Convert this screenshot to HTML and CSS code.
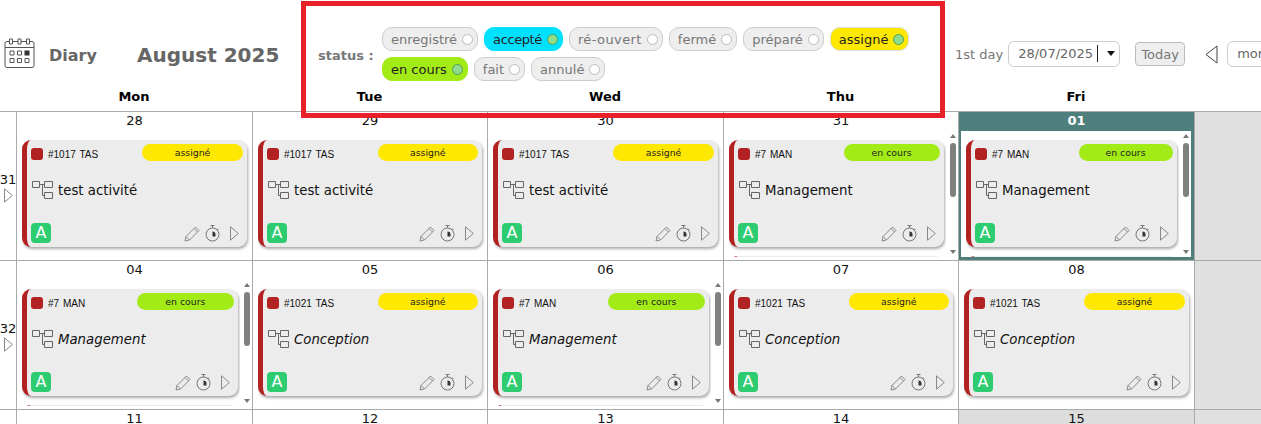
FILE: index.html
```html
<!DOCTYPE html>
<html lang="en">
<head>
  <meta charset="UTF-8" />
  <meta name="viewport" content="width=device-width, initial-scale=1" />
  <title>Diary</title>
  <link rel="stylesheet" href="styles.css">
</head>
<body>

<svg class="defs" width="0" height="0">
  <symbol id="i-flow" viewBox="0 0 21 18">
    <path d="M.5.5h7v6h-7zM12.500.5h8v6h-8zM12.500 11.500h8v6h-8zM7.500 3.500h5M10.500 3.500v11h2" fill="none" stroke="#666"/>
  </symbol>
  <symbol id="i-pencil" viewBox="0 0 16 16">
    <path d="M1 15l1-4.500L11.500 1l3.500 3.500L5.500 14zM2 10.500L5.500 14M10 2.500L13.500 6" fill="none" stroke="#888"/>
  </symbol>
  <symbol id="i-timer" viewBox="0 0 15 17">
    <circle cx="7.500" cy="9.500" r="6.500" fill="none" stroke="#777"/>
    <path d="M5.500.5h4M7.500.5v2.500M12 3.500l1.500 1.500" fill="none" stroke="#777"/>
    <path d="M7.500 6.500a3 3 0 0 1 3 3v2h-3z" fill="#333"/>
  </symbol>
  <symbol id="i-play" viewBox="0 0 9 15">
    <path d="M.5.8L8.300 7.500.5 14.200z" fill="none" stroke="#888"/>
  </symbol>
</svg>

<div class="header">
  <svg class="cal-icon" viewBox="0 0 31 30" width="31" height="30">
    <path d="M3 3.500h25a2 2 0 0 1 2 2v22a2 2 0 0 1-2 2H3a2 2 0 0 1-2-2v-22a2 2 0 0 1 2-2z" fill="#fff" stroke="#555"/>
    <path d="M1 9.500h29" stroke="#555"/>
    <path d="M5.500 1h3v5h-3zM14 1h3v5h-3zM22.500 1h3v5h-3z" fill="#fff" stroke="#555"/>
    <path d="M6 13h4v4H6zM13.500 13h4v4h-4zM6 20.500h4v4H6zM13.500 20.500h4v4h-4zM21 20.500h4v4h-4z" fill="none" stroke="#555"/>
    <path d="M20.500 12.500h5v5h-5z" fill="#333"/>
  </svg>
  <div class="diary">Diary</div>
  <div class="month">August 2025</div>
  <div class="status-label">status :</div>
  <div class="status-list">
    <span class="pill">enregistré<i></i></span>
    <span class="pill on accepted">accepté<i></i></span>
    <span class="pill spaced">ré-ouvert<i></i></span>
    <span class="pill">fermé<i></i></span>
    <span class="pill">préparé<i></i></span>
    <span class="pill on assigned">assigné<i></i></span>
    <span class="pill on progress">en cours<i></i></span>
    <span class="pill">fait<i></i></span>
    <span class="pill">annulé<i></i></span>
  </div>
  <label class="first-day">1st day</label>
  <div class="date-box">28/07/2025<b class="caret"></b><b class="arrow"></b></div>
  <button class="today">Today</button>
  <svg class="prev" viewBox="0 0 13 19" width="13" height="19"><path d="M12 1L1 9.500 12 18z" fill="none" stroke="#444"/></svg>
  <div class="mode-box">month</div>
</div>

<div class="day-names">
  <div></div>
  <div>Mon</div>
  <div>Tue</div>
  <div>Wed</div>
  <div>Thu</div>
  <div>Fri</div>
</div>

<div class="calendar">

  <!-- week 31 -->
  <div class="week">31<svg width="9" height="15"><use href="#i-play"/></svg></div>

  <div class="day">
    <div class="num">28</div>
    <div class="body">
      <div class="list">
        <div class="card">
          <div class="card-top"><span class="sq"></span><span class="ref">#1017 TAS</span><span class="tag assigned">assigné</span></div>
          <div class="card-title"><svg width="21" height="18"><use href="#i-flow"/></svg>test activité</div>
          <div class="card-foot"><span class="letter">A</span><span class="tools"><svg width="16" height="16"><use href="#i-pencil"/></svg><svg width="15" height="17"><use href="#i-timer"/></svg><svg width="9" height="15"><use href="#i-play"/></svg></span></div>
        </div>
      </div>
    </div>
  </div>

  <div class="day">
    <div class="num">29</div>
    <div class="body">
      <div class="list">
        <div class="card">
          <div class="card-top"><span class="sq"></span><span class="ref">#1017 TAS</span><span class="tag assigned">assigné</span></div>
          <div class="card-title"><svg width="21" height="18"><use href="#i-flow"/></svg>test activité</div>
          <div class="card-foot"><span class="letter">A</span><span class="tools"><svg width="16" height="16"><use href="#i-pencil"/></svg><svg width="15" height="17"><use href="#i-timer"/></svg><svg width="9" height="15"><use href="#i-play"/></svg></span></div>
        </div>
      </div>
    </div>
  </div>

  <div class="day">
    <div class="num">30</div>
    <div class="body">
      <div class="list">
        <div class="card">
          <div class="card-top"><span class="sq"></span><span class="ref">#1017 TAS</span><span class="tag assigned">assigné</span></div>
          <div class="card-title"><svg width="21" height="18"><use href="#i-flow"/></svg>test activité</div>
          <div class="card-foot"><span class="letter">A</span><span class="tools"><svg width="16" height="16"><use href="#i-pencil"/></svg><svg width="15" height="17"><use href="#i-timer"/></svg><svg width="9" height="15"><use href="#i-play"/></svg></span></div>
        </div>
      </div>
    </div>
  </div>

  <div class="day">
    <div class="num">31</div>
    <div class="body">
      <div class="list">
        <div class="card">
          <div class="card-top"><span class="sq"></span><span class="ref">#7 MAN</span><span class="tag progress">en cours</span></div>
          <div class="card-title"><svg width="21" height="18"><use href="#i-flow"/></svg>Management</div>
          <div class="card-foot"><span class="letter">A</span><span class="tools"><svg width="16" height="16"><use href="#i-pencil"/></svg><svg width="15" height="17"><use href="#i-timer"/></svg><svg width="9" height="15"><use href="#i-play"/></svg></span></div>
        </div>
        <div class="card"></div>
      </div>
      <div class="scroll"><b class="up"></b><b class="thumb"></b><b class="down"></b></div>
    </div>
  </div>

  <div class="day today-cell">
    <div class="num">01</div>
    <div class="body">
      <div class="list">
        <div class="card">
          <div class="card-top"><span class="sq"></span><span class="ref">#7 MAN</span><span class="tag progress">en cours</span></div>
          <div class="card-title"><svg width="21" height="18"><use href="#i-flow"/></svg>Management</div>
          <div class="card-foot"><span class="letter">A</span><span class="tools"><svg width="16" height="16"><use href="#i-pencil"/></svg><svg width="15" height="17"><use href="#i-timer"/></svg><svg width="9" height="15"><use href="#i-play"/></svg></span></div>
        </div>
        <div class="card"></div>
      </div>
      <div class="scroll"><b class="up"></b><b class="thumb"></b><b class="down"></b></div>
    </div>
  </div>

  <div class="off"></div>

  <!-- week 32 -->
  <div class="week">32<svg width="9" height="15"><use href="#i-play"/></svg></div>

  <div class="day">
    <div class="num">04</div>
    <div class="body">
      <div class="list">
        <div class="card">
          <div class="card-top"><span class="sq"></span><span class="ref">#7 MAN</span><span class="tag progress">en cours</span></div>
          <div class="card-title em"><svg width="21" height="18"><use href="#i-flow"/></svg>Management</div>
          <div class="card-foot"><span class="letter">A</span><span class="tools"><svg width="16" height="16"><use href="#i-pencil"/></svg><svg width="15" height="17"><use href="#i-timer"/></svg><svg width="9" height="15"><use href="#i-play"/></svg></span></div>
        </div>
        <div class="card"></div>
      </div>
      <div class="scroll"><b class="up"></b><b class="thumb"></b><b class="down"></b></div>
    </div>
  </div>

  <div class="day">
    <div class="num">05</div>
    <div class="body">
      <div class="list">
        <div class="card">
          <div class="card-top"><span class="sq"></span><span class="ref">#1021 TAS</span><span class="tag assigned">assigné</span></div>
          <div class="card-title em"><svg width="21" height="18"><use href="#i-flow"/></svg>Conception</div>
          <div class="card-foot"><span class="letter">A</span><span class="tools"><svg width="16" height="16"><use href="#i-pencil"/></svg><svg width="15" height="17"><use href="#i-timer"/></svg><svg width="9" height="15"><use href="#i-play"/></svg></span></div>
        </div>
      </div>
    </div>
  </div>

  <div class="day">
    <div class="num">06</div>
    <div class="body">
      <div class="list">
        <div class="card">
          <div class="card-top"><span class="sq"></span><span class="ref">#7 MAN</span><span class="tag progress">en cours</span></div>
          <div class="card-title em"><svg width="21" height="18"><use href="#i-flow"/></svg>Management</div>
          <div class="card-foot"><span class="letter">A</span><span class="tools"><svg width="16" height="16"><use href="#i-pencil"/></svg><svg width="15" height="17"><use href="#i-timer"/></svg><svg width="9" height="15"><use href="#i-play"/></svg></span></div>
        </div>
        <div class="card"></div>
      </div>
      <div class="scroll"><b class="up"></b><b class="thumb"></b><b class="down"></b></div>
    </div>
  </div>

  <div class="day">
    <div class="num">07</div>
    <div class="body">
      <div class="list">
        <div class="card">
          <div class="card-top"><span class="sq"></span><span class="ref">#1021 TAS</span><span class="tag assigned">assigné</span></div>
          <div class="card-title em"><svg width="21" height="18"><use href="#i-flow"/></svg>Conception</div>
          <div class="card-foot"><span class="letter">A</span><span class="tools"><svg width="16" height="16"><use href="#i-pencil"/></svg><svg width="15" height="17"><use href="#i-timer"/></svg><svg width="9" height="15"><use href="#i-play"/></svg></span></div>
        </div>
      </div>
    </div>
  </div>

  <div class="day">
    <div class="num">08</div>
    <div class="body">
      <div class="list">
        <div class="card">
          <div class="card-top"><span class="sq"></span><span class="ref">#1021 TAS</span><span class="tag assigned">assigné</span></div>
          <div class="card-title em"><svg width="21" height="18"><use href="#i-flow"/></svg>Conception</div>
          <div class="card-foot"><span class="letter">A</span><span class="tools"><svg width="16" height="16"><use href="#i-pencil"/></svg><svg width="15" height="17"><use href="#i-timer"/></svg><svg width="9" height="15"><use href="#i-play"/></svg></span></div>
        </div>
      </div>
    </div>
  </div>

  <div class="off"></div>

  <!-- week 33 -->
  <div class="week"></div>
  <div class="day"><div class="num">11</div></div>
  <div class="day"><div class="num">12</div></div>
  <div class="day"><div class="num">13</div></div>
  <div class="day"><div class="num">14</div></div>
  <div class="day holiday"><div class="num">15</div></div>
  <div class="off"></div>
</div>

<!-- red highlight drawn over the screenshot -->
<div class="highlight"></div>

</body>
</html>
```

FILE: styles.css
```css
html, body {
  height: 100%;
  margin: 0;
  overflow: hidden;
}

body {
  position: relative;
  background: #fff;
  font-family: "DejaVu Sans", Verdana, sans-serif;
  font-size: 13px;
  color: #222;
}

.defs {
  position: absolute;
}

/* top bar */
.header {
  display: flex;
  align-items: center;
  height: 54px;
  padding-top: 27px;
  padding-left: 4px;
  white-space: nowrap;
  overflow: hidden;
}
.header > * {
  flex: none;
}
.cal-icon {
  margin-bottom: 2px;
}
.diary {
  box-sizing: border-box;
  margin-left: 14px;
  margin-top: 2px;
  width: 88px;
  font-size: 16px;
  font-weight: bold;
  color: #666;
}
.month {
  margin-top: 2px;
  width: 181px;
  font-size: 20px;
  font-weight: bold;
  color: #666;
}
.status-label {
  margin-top: 2px;
  width: 64px;
  font-weight: bold;
  color: #777;
}
.status-list {
  display: flex;
  flex-wrap: wrap;
  align-content: center;
  gap: 6px;
  width: 560px;
}
.pill {
  display: flex;
  align-items: center;
  box-sizing: border-box;
  height: 24px;
  padding: 0 4px 0 8px;
  border: 1px solid #ccc;
  border-radius: 10px;
  background: #eee;
  color: #777;
}
.pill i {
  box-sizing: border-box;
  width: 11px;
  height: 11px;
  margin-left: 5px;
  border: 1px solid #bbb;
  border-radius: 50%;
  background: #fff;
}
.pill.on {
  color: #222;
}
.pill.on i {
  background: #8fdc8a;
  border-color: #4f9f5a;
}
.pill.spaced {
  letter-spacing: .4px;
}
.pill.accepted {
  letter-spacing: -.4px;
}
.accepted { background: #00e1ff; border-color: #00e1ff; }
.assigned { background: #ffe800; border-color: #ddd; }
.progress { background: #a2eb16; border-color: #a2eb16; }

.first-day {
  margin-left: 13px;
  color: #777;
}
.date-box {
  position: relative;
  box-sizing: border-box;
  width: 112px;
  height: 26px;
  line-height: 24px;
  margin-left: 5px;
  padding-left: 9px;
  border: 1px solid #ccc;
  border-radius: 6px;
  color: #666;
}
.caret {
  position: absolute;
  left: 88px;
  top: 3px;
  width: 1px;
  height: 17px;
  background: #222;
}
.arrow {
  position: absolute;
  left: 98px;
  top: 9px;
  border: 4px solid transparent;
  border-top: 5px solid #111;
}
.today {
  box-sizing: border-box;
  width: 50px;
  height: 24px;
  margin-left: 15px;
  padding: 0;
  border: 1px solid #bbb;
  border-radius: 4px;
  background: #eee;
  font: 13px "DejaVu Sans", Verdana, sans-serif;
  color: #777;
}
.prev {
  margin-left: 20px;
}
.mode-box {
  box-sizing: border-box;
  width: 100px;
  height: 26px;
  line-height: 24px;
  margin-left: 9px;
  padding-left: 9px;
  border: 1px solid #ccc;
  border-radius: 6px;
  color: #666;
}

/* calendar */
.day-names,
.calendar {
  display: grid;
  grid-template-columns: 16px 236px 235px 236px 235px 236px 67px;
}
.day-names {
  box-sizing: border-box;
  height: 30px;
  padding-top: 1px;
  line-height: 30px;
  text-align: center;
  font-weight: bold;
  color: #000;
}
.calendar {
  box-sizing: border-box;
  height: 313px;
  grid-template-rows: 149px 149px 20px;
  border-top: 1px solid #aaa;
  overflow: hidden;
}

.week {
  display: flex;
  flex-direction: column;
  align-items: center;
  justify-content: center;
  padding-top: 2px;
  box-sizing: border-box;
  height: 100%;
  border-bottom: 1px solid #aaa;
  color: #111;
  line-height: 16px;
}

.day {
  display: flex;
  flex-direction: column;
  box-sizing: border-box;
  min-width: 0;
  height: 100%;
  border-left: 1px solid #aaa;
  border-bottom: 1px solid #aaa;
  overflow: hidden;
}
.num {
  flex: none;
  height: 19px;
  line-height: 18px;
  text-align: center;
  color: #111;
}
.body {
  display: flex;
  flex: 1;
  min-height: 0;
  padding: 0 1px 3px 5px;
}
.list {
  flex: 1;
  min-width: 0;
  display: flex;
  flex-direction: column;
  gap: 9px;
  padding-top: 9px;
  padding-right: 2.5px;
  overflow: hidden;
}
.list:only-child {
  padding-right: 4px;
}

/* fake scrollbar */
.scroll {
  flex: none;
  display: flex;
  flex-direction: column;
  align-items: center;
  width: 8px;
  margin-left: 3px;
  padding-top: 3px;
}
.scroll .up,
.scroll .down {
  flex: none;
  border: 3px solid transparent;
}
.scroll .up {
  border-bottom: 4px solid #777;
  border-top-width: 0;
}
.scroll .down {
  margin-top: auto;
  border-top: 4px solid #777;
  border-bottom-width: 0;
  margin-bottom: 3px;
}
.thumb {
  flex: none;
  width: 6px;
  height: 54px;
  margin-top: 5px;
  border-radius: 3px;
  background: #808080;
}

/* activity card */
.card {
  flex: none;
  box-sizing: border-box;
  height: 107px;
  padding: 4px;
  display: flex;
  flex-direction: column;
  border-left: 5px solid #b22222;
  border-radius: 9px;
  background: #ececec;
  box-shadow: 1px 2px 3px #aaa;
}
.card-top {
  display: flex;
  align-items: center;
  height: 17px;
}
.sq {
  flex: none;
  width: 12px;
  height: 12px;
  margin-top: 3px;
  border-radius: 3px;
  background: #b22222;
}
.ref {
  margin-left: 5px;
  margin-top: 3px;
  font-family: "Liberation Sans", Arial, sans-serif;
  font-size: 10px;
  word-spacing: 1px;
  color: #111;
}
.tag {
  flex: none;
  width: 47.6%;
  height: 17px;
  margin-left: auto;
  line-height: 17px;
  border: 0;
  border-radius: 9px;
  text-align: center;
  font-size: 9.33px;
  color: #222;
}
.card-title {
  display: flex;
  align-items: center;
  gap: 5px;
  height: 18px;
  margin-top: 20px;
  margin-left: 1px;
  font-size: 13.3px;
  color: #111;
}
.card-title.em {
  font-style: italic;
}
.card-title svg {
  flex: none;
}
.card-foot {
  display: flex;
  align-items: flex-end;
  justify-content: space-between;
  margin-top: auto;
}
.letter {
  width: 20px;
  height: 20px;
  line-height: 20px;
  border-radius: 4px;
  background: #2ecc71;
  text-align: center;
  font-size: 16px;
  color: #fff;
}
.tools {
  display: flex;
  align-items: center;
  gap: 5px;
  margin-right: 4px;
  margin-bottom: 1px;
}
.tools svg:last-child {
  margin-left: 5px;
}

/* today and closed days */
.today-cell {
  border-left-color: #aaa;
  background: #4f7f7d;
}
.today-cell .num {
  color: #fff;
  font-weight: bold;
}
.today-cell .body {
  margin: 0 3px 3px 2px;
  padding: 0 1px 0 5px;
  background: #fff;
  height: 126px;
  flex: none;
}
.holiday {
  background: #ddd;
}
.off {
  box-sizing: border-box;
  height: 100%;
  border-left: 1px solid #aaa;
  border-bottom: 1px solid #aaa;
  background: #e0e0e0;
}

/* red box over the status filter */
.highlight {
  position: absolute;
  left: 301px;
  top: 1px;
  width: 634px;
  height: 107px;
  border: 5px solid #e8202a;
}
```
